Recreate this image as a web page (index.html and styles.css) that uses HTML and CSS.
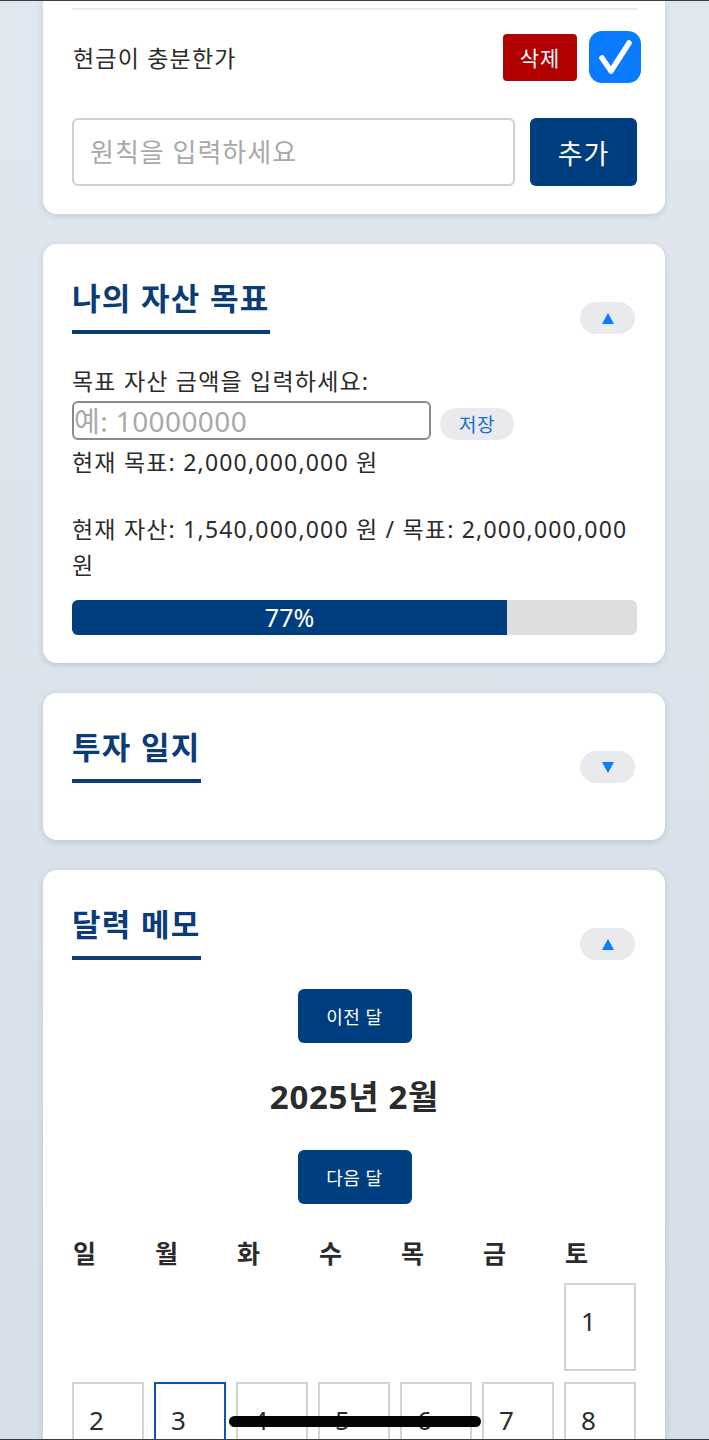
FILE: index.html
```html
<!DOCTYPE html>
<html lang="ko">
<head>
<meta charset="utf-8">
<title>투자 노트</title>
<link rel="stylesheet" href="styles.css">
</head>
<body>
<div class="page">
  <section class="card card-cut">
    <ul class="rules">
      <li class="rule">
        <span class="rule-text">현금이 충분한가</span>
        <div class="rule-actions">
          <button class="btn-delete">삭제</button>
          <span class="check">
            <svg width="52" height="52" viewBox="0 0 52 52"><polyline points="13,27 22,40 40,12" fill="none" stroke="#fff" stroke-width="5.5" stroke-linecap="round" stroke-linejoin="round"/></svg>
          </span>
        </div>
      </li>
    </ul>
    <form class="rule-form">
      <input class="rule-input" type="text" placeholder="원칙을 입력하세요">
      <button class="btn-add" type="button">추가</button>
    </form>
  </section>

  <section class="card">
    <div class="card-head">
      <h2 class="card-title">나의 자산 목표</h2>
      <button class="toggle"><svg width="12" height="11" viewBox="0 0 12 11"><polygon points="6,0 12,11 0,11" fill="#0a7bff"/></svg></button>
    </div>
    <label class="goal-label">목표 자산 금액을 입력하세요:</label>
    <div class="goal-row">
      <input class="goal-input" type="text" placeholder="예: 10000000">
      <button class="btn-save">저장</button>
    </div>
    <p class="goal-now">현재 목표: 2,000,000,000 원</p>
    <p class="goal-status">현재 자산: 1,540,000,000 원 / 목표: 2,000,000,000 원</p>
    <div class="progress">
      <div class="progress-fill" style="width:77%">77%</div>
    </div>
  </section>

  <section class="card">
    <div class="card-head">
      <h2 class="card-title">투자 일지</h2>
      <button class="toggle"><svg width="12" height="11" viewBox="0 0 12 11"><polygon points="0,0 12,0 6,11" fill="#0a7bff"/></svg></button>
    </div>
  </section>

  <section class="card">
    <div class="card-head">
      <h2 class="card-title">달력 메모</h2>
      <button class="toggle"><svg width="12" height="11" viewBox="0 0 12 11"><polygon points="6,0 12,11 0,11" fill="#0a7bff"/></svg></button>
    </div>
    <div class="cal-nav">
      <button class="btn-month">이전 달</button>
      <h3 class="cal-title">2025년 2월</h3>
      <button class="btn-month">다음 달</button>
    </div>
    <div class="cal-grid">
      <div class="wd">일</div><div class="wd">월</div><div class="wd">화</div><div class="wd">수</div><div class="wd">목</div><div class="wd">금</div><div class="wd">토</div>
      <div class="blank"></div><div class="blank"></div><div class="blank"></div><div class="blank"></div><div class="blank"></div><div class="blank"></div>
      <div class="day">1</div>
      <div class="day">2</div>
      <div class="day day-today">3</div>
      <div class="day">4</div>
      <div class="day">5</div>
      <div class="day">6</div>
      <div class="day">7</div>
      <div class="day">8</div>
    </div>
  </section>
</div>
<div class="edge-top"></div>
<div class="edge-bottom"></div>
<div class="home-indicator"></div>
</body>
</html>
```
FILE: styles.css
```css
* { box-sizing: border-box; }
html, body { margin: 0; padding: 0; }
body {
  font-family: "Noto Sans", "Noto Sans CJK KR", sans-serif;
  color: #2b2b2b;
  background: linear-gradient(180deg, #e1e7ee 0%, #d6dee8 100%);
  min-height: 1440px;
  overflow: hidden;
}
.page {
  padding: 0 44px 0 43px;
  height: 1440px;
  overflow: hidden;
}
.card {
  background: #fff;
  border-radius: 14px;
  box-shadow: 0 2px 6px rgba(40, 60, 90, 0.16);
  padding: 28px 28px 28px 29px;
  margin-bottom: 30px;
}
.card-cut {
  border-radius: 0 0 14px 14px;
  padding-top: 8px;
}
.rules { list-style: none; margin: 0; padding: 0; }
.rule {
  border-top: 2px solid #ececec;
  padding: 21px 0 21px 1px;
  display: flex;
  align-items: center;
  justify-content: space-between;
}
.rule-text { font-size: 23px; letter-spacing: 1.2px; }
.rule-actions { display: flex; align-items: center; gap: 12px; margin-right: -4px; }
.btn-delete {
  width: 74px; height: 47px;
  background: #b30000;
  color: #fff;
  border: none;
  border-radius: 4px;
  font-family: inherit;
  font-size: 21px;
  letter-spacing: 1px;
  padding: 0;
}
.check {
  width: 52px; height: 52px;
  background: #0a7bff;
  border-radius: 13px;
  display: block;
}
.check svg { display: block; }
.rule-form { display: flex; gap: 15px; margin-top: 14px; }
.rule-input {
  flex: 1;
  min-width: 0;
  height: 68px;
  border: 2px solid #cfcfcf;
  border-radius: 6px;
  padding: 0 16px;
  font-family: inherit;
  font-size: 26px;
  letter-spacing: 1px;
  color: #333;
}
.rule-input::placeholder { color: #a9a9a9; }
.btn-add {
  width: 107px; height: 68px;
  background: #003f7f;
  color: #fff;
  border: none;
  border-radius: 6px;
  font-family: inherit;
  font-size: 27px;
  letter-spacing: 1px;
  padding: 0;
}
.card-head {
  display: flex;
  justify-content: space-between;
  align-items: flex-end;
  margin-bottom: 29px;
}
.card-title {
  margin: 8px 0 0;
  font-size: 31px;
  line-height: 36px;
  font-weight: 700;
  color: #0b3c78;
  padding-bottom: 14px;
  border-bottom: 4px solid #0b3c78;
  letter-spacing: 1.3px;
}
.toggle {
  width: 55px; height: 32px;
  border: none;
  border-radius: 16px;
  background: #e9eaed;
  display: flex;
  align-items: center;
  justify-content: center;
  padding: 0;
  margin-right: 2px;
}
.toggle svg { display: block; }
.goal-label, .goal-now, .goal-status {
  font-size: 23px;
  line-height: 36px;
  letter-spacing: 1.2px;
}
.goal-label { display: block; }
.goal-row { display: flex; align-items: flex-end; gap: 9px; margin-top: 2px; }
.goal-input {
  width: 359px; height: 39px;
  border: 2px solid #8a8a8a;
  border-radius: 6px;
  padding: 0;
  font-family: inherit;
  font-size: 28px;
  letter-spacing: 0.4px;
}
.goal-input::placeholder { color: #a9a9a9; }
.btn-save {
  width: 74px; height: 32px;
  border: none;
  border-radius: 16px;
  background: #e9eaed;
  color: #1a6fd6;
  font-family: inherit;
  font-size: 19px;
  letter-spacing: 0.5px;
  padding: 0;
}
.goal-now { margin: 4px 0 0; }
.goal-status { margin: 31px 0 0; }
.progress {
  margin-top: 17px;
  height: 35px;
  background: #dedede;
  border-radius: 6px;
  overflow: hidden;
}
.progress-fill {
  height: 100%;
  background: #003f7f;
  color: #fff;
  font-size: 25px;
  line-height: 35px;
  text-align: center;
}
.cal-nav { display: flex; flex-direction: column; align-items: center; }
.btn-month {
  width: 114px; height: 54px;
  background: #003f7f;
  color: #fff;
  border: none;
  border-radius: 6px;
  font-family: inherit;
  font-size: 18px;
  letter-spacing: 0.5px;
  padding: 0;
}
.cal-title {
  margin: 31px 0 31px;
  font-size: 33px;
  line-height: 45px;
  font-weight: 700;
  letter-spacing: 0.7px;
  color: #2b2b2b;
}
.cal-grid {
  display: grid;
  grid-template-columns: repeat(7, 72px);
  column-gap: 10px;
  row-gap: 11px;
  margin-top: 32px;
}
.wd {
  font-size: 25px;
  font-weight: 700;
  line-height: 34px;
  padding-left: 1px;
  margin-bottom: 2px;
}
.day {
  height: 88px;
  border: 2px solid #d3d3d3;
  padding: 17px 15px;
  font-size: 26px;
  line-height: 38px;
  color: #2b2b2b;
}
.day-today { border-color: #0b57b0; }
.edge-top {
  position: fixed; left: 0; right: 0; top: 0;
  height: 1px; background: #3c3c3c;
}
.edge-bottom {
  position: fixed; left: 0; right: 0; bottom: 0;
  height: 1px; background: #3c3c3c;
}
.home-indicator {
  position: fixed;
  left: 229px;
  width: 252px;
  bottom: 13px;
  height: 11px;
  border-radius: 6px;
  background: #050505;
}
```
